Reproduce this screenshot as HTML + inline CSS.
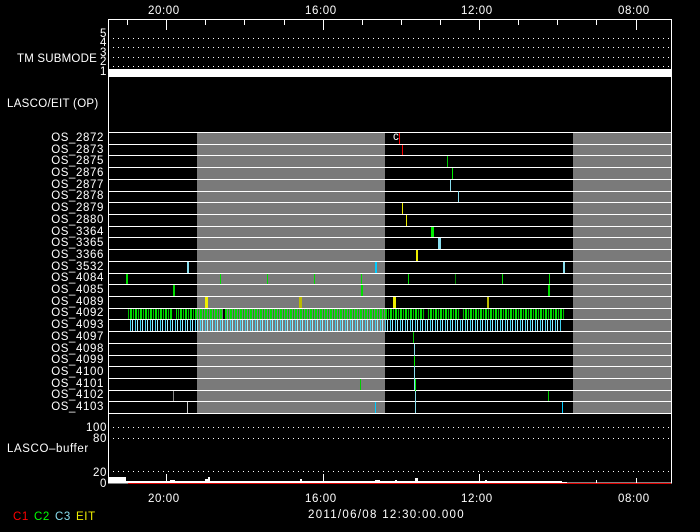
<!DOCTYPE html>
<html><head><style>
html,body{margin:0;padding:0;background:#000;width:700px;height:532px;overflow:hidden}
svg{display:block}
text{font-family:"Liberation Sans",sans-serif;fill:#fff;font-size:11.5px;letter-spacing:0.6px}
</style></head><body>
<svg width="700" height="532" xmlns="http://www.w3.org/2000/svg">
<defs>
<pattern id="pg" width="5" height="12" patternUnits="userSpaceOnUse"><rect x="0" y="0" width="2" height="12" fill="#00e000"/><rect x="3" y="0" width="1" height="12" fill="#00c000"/></pattern>
<pattern id="pc" width="5" height="12" patternUnits="userSpaceOnUse"><rect x="0" y="0" width="1" height="12" fill="#40d0f0"/><rect x="2" y="0" width="1" height="12" fill="#a0f0ff"/></pattern>
</defs>
<g style="font-size:12px;letter-spacing:1.2px">
<text x="148" y="14">20:00</text><text x="305" y="14">16:00</text><text x="461" y="14">12:00</text><text x="618" y="14">08:00</text>
</g>
<rect x="108.5" y="19.5" width="563" height="463.5" fill="none" stroke="#fff"/>
<g stroke="#fff">
<path d="M127.5 20v5M166.5 20v10M205.5 20v5M244.5 20v5M284.5 20v5M323.5 20v10M362.5 20v5M401.5 20v5M440.5 20v5M479.5 20v10M518.5 20v5M557.5 20v5M596.5 20v5M636.5 20v10"/>
</g>
<g stroke="#fff" stroke-dasharray="1 4">
<path d="M113 38.5H670M113 47.5H670M113 57.5H670M113 66.5H670"/>
</g>
<rect x="109" y="69" width="562" height="8" fill="#fff"/>
<text x="17" y="62" style="letter-spacing:0.2px;font-size:11.5px">TM SUBMODE</text>
<text x="100" y="37" font-size="10" style="letter-spacing:0">5</text><text x="100" y="46" font-size="10" style="letter-spacing:0">4</text><text x="100" y="56" font-size="10" style="letter-spacing:0">3</text><text x="100" y="65" font-size="10" style="letter-spacing:0">2</text><text x="100" y="75" font-size="10" style="letter-spacing:0">1</text>
<text x="7" y="107" style="letter-spacing:0.3px">LASCO/EIT (OP)</text>
<rect x="197" y="132" width="188" height="281" fill="#7a7a7a"/>
<rect x="573" y="132" width="98" height="281" fill="#7a7a7a"/>
<g stroke="#fff" stroke-width="1">
<path d="M109 132.5H671M109 144.5H671M109 155.5H671M109 167.5H671M109 179.5H671M109 191.5H671M109 202.5H671M109 214.5H671M109 226.5H671M109 237.5H671M109 249.5H671M109 261.5H671M109 273.5H671M109 284.5H671M109 296.5H671M109 308.5H671M109 319.5H671M109 331.5H671M109 343.5H671M109 355.5H671M109 366.5H671M109 378.5H671M109 390.5H671M109 401.5H671M109 413.5H671"/>
</g>
<g text-anchor="end" style="font-size:12px;letter-spacing:0.9px">
<text x="104" y="141">OS_2872</text><text x="104" y="153">OS_2873</text><text x="104" y="164">OS_2875</text><text x="104" y="176">OS_2876</text><text x="104" y="188">OS_2877</text><text x="104" y="199">OS_2878</text><text x="104" y="211">OS_2879</text><text x="104" y="223">OS_2880</text><text x="104" y="235">OS_3364</text><text x="104" y="246">OS_3365</text><text x="104" y="258">OS_3366</text><text x="104" y="270">OS_3532</text><text x="104" y="281">OS_4084</text><text x="104" y="293">OS_4085</text><text x="104" y="305">OS_4089</text><text x="104" y="316">OS_4092</text><text x="104" y="328">OS_4093</text><text x="104" y="340">OS_4097</text><text x="104" y="352">OS_4098</text><text x="104" y="363">OS_4099</text><text x="104" y="375">OS_4100</text><text x="104" y="387">OS_4101</text><text x="104" y="398">OS_4102</text><text x="104" y="410">OS_4103</text>
</g>
<text x="393" y="140" font-size="9">c</text>
<rect x="399" y="133" width="1" height="11" fill="#f00"/>
<rect x="402" y="145" width="1" height="10" fill="#f00"/>
<rect x="447" y="156" width="1" height="11" fill="#0c0"/>
<rect x="452" y="168" width="1" height="11" fill="#0e0"/>
<rect x="450" y="180" width="1" height="11" fill="#8de"/>
<rect x="458" y="191" width="1" height="11" fill="#8de"/>
<rect x="402" y="203" width="1" height="11" fill="#ee0"/>
<rect x="406" y="215" width="1" height="11" fill="#ee0"/>
<rect x="431" y="227" width="3" height="10" fill="#0e0"/>
<rect x="438" y="238" width="3" height="11" fill="#8de"/>
<rect x="416" y="250" width="2" height="11" fill="#ee0"/>
<rect x="187" y="262" width="2" height="11" fill="#8de"/><rect x="375" y="262" width="2" height="11" fill="#0cf"/><rect x="563" y="262" width="2" height="11" fill="#8de"/>
<g fill="#0d0"><rect x="126" y="274" width="2" height="10"/><rect x="220" y="274" width="1" height="10"/><rect x="267" y="274" width="1" height="10"/><rect x="314" y="274" width="1" height="10"/><rect x="361" y="274" width="1" height="10"/><rect x="408" y="274" width="1" height="10"/><rect x="455" y="274" width="1" height="10" fill="#080"/><rect x="502" y="274" width="1" height="10"/><rect x="549" y="274" width="1" height="10"/>
<rect x="173" y="285" width="2" height="11"/><rect x="361" y="285" width="2" height="11"/><rect x="548" y="285" width="2" height="11"/></g>
<rect x="205" y="297" width="3" height="11" fill="#ee0"/><rect x="299" y="297" width="3" height="11" fill="#bb0"/><rect x="393" y="297" width="3" height="11" fill="#ee0"/><rect x="487" y="297" width="2" height="11" fill="#bb0"/>
<rect x="128" y="309" width="437" height="10" fill="url(#pg)"/>
<rect x="128" y="320" width="434" height="11" fill="url(#pc)"/>
<g fill="#000"><rect x="173" y="309" width="3" height="10"/><rect x="223" y="309" width="2" height="10"/><rect x="425" y="309" width="2" height="10"/><rect x="460" y="309" width="2" height="10"/></g>
<rect x="413" y="332" width="1" height="11" fill="#0c0"/>
<rect x="414" y="344" width="1" height="46" fill="#8de"/>
<rect x="414" y="356" width="1" height="10" fill="#0e0"/>
<rect x="415" y="379" width="1" height="22" fill="#0e0"/>
<rect x="415" y="391" width="1" height="22" fill="#8de"/>
<rect x="360" y="379" width="1" height="11" fill="#0c0"/>
<rect x="548" y="391" width="1" height="10" fill="#0c0"/>
<rect x="173" y="391" width="1" height="10" fill="#888"/>
<rect x="187" y="402" width="1" height="11" fill="#ccc"/>
<rect x="375" y="402" width="1" height="11" fill="#0cf"/>
<rect x="562" y="402" width="1" height="11" fill="#0cf"/>
<g stroke="#fff" stroke-dasharray="1 4">
<path d="M113 427.5H670M113 438.5H670M113 471.5H670"/>
</g>
<g style="font-size:12px;letter-spacing:0.8px">
<text x="86" y="431">100</text><text x="93" y="442">80</text><text x="7" y="452">LASCO–buffer</text><text x="93" y="476">20</text><text x="100" y="487">0</text>
</g>
<path d="M109 483V477H126V481H170V480H175V481H205V479H208V477H210V481H300V479H302V481H375V480H380V481H395V480H397V481H415V478H418V481H485V480H487V481H562V482H567V483Z" fill="#fff"/>
<path d="M166.5 474V483M323.5 474V483M479.5 474V483M636.5 478V483M596.5 480V483" stroke="#fff"/>
<path d="M128 483.5H671" stroke="#d00"/>
<g style="font-size:12px;letter-spacing:1.2px">
<text x="148" y="502">20:00</text><text x="305" y="502">16:00</text><text x="461" y="502">12:00</text><text x="618" y="502">08:00</text>
<text x="308" y="518" style="letter-spacing:1.3px">2011/06/08  12:30:00.000</text>
</g>
<text x="13" y="520" font-size="9" style="fill:#f00">C1</text><text x="34" y="520" font-size="9" style="fill:#0f0">C2</text><text x="55" y="520" font-size="9" style="fill:#8de">C3</text><text x="76" y="520" font-size="9" style="fill:#ee0">EIT</text>
</svg>
</body></html>
